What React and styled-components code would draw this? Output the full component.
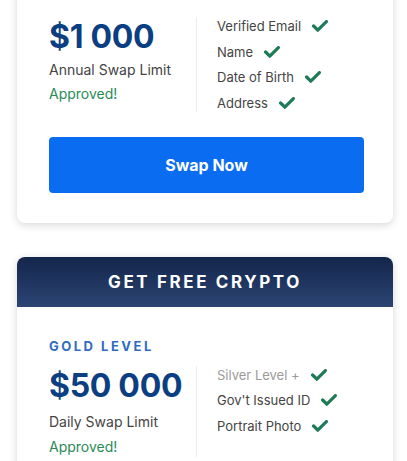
import React from "react";
import styled, { createGlobalStyle } from "styled-components";

const GlobalStyle = createGlobalStyle`
  html, body {
    margin: 0;
    padding: 0;
    background: #fff;
    font-family: Inter, "Noto Sans", sans-serif;
    overflow: hidden;
  }
`;

const Page = styled.div`
  width: 407px;
  height: 461px;
  overflow: hidden;
  padding-left: 17px;
  box-sizing: border-box;
  display: flex;
  flex-direction: column;
  gap: 34px;
`;

const Card = styled.div`
  width: 376px;
  background: #fff;
  border-radius: 8px;
  box-shadow: 0 2px 8px rgba(0, 0, 0, 0.16);
  overflow: hidden;
  flex-shrink: 0;
  margin-top: ${(p) => p.$offset || 0}px;
`;

const Header = styled.div`
  height: 50px;
  display: flex;
  align-items: center;
  justify-content: center;
  background: linear-gradient(180deg, #13254a 0%, #2c4574 100%);
  color: #fff;
  font-size: 17px;
  font-weight: 700;
  letter-spacing: 2.6px;
`;

const Body = styled.div`
  padding: ${(p) => p.$top}px 30px 30px 32px;
`;

const Level = styled.div`
  color: #2f6cc0;
  font-size: 13px;
  font-weight: 700;
  letter-spacing: 2.5px;
  line-height: 16px;
  margin-bottom: 12px;
`;

const Row = styled.div`
  display: flex;
`;

const Left = styled.div`
  width: 147px;
  display: flex;
  flex-direction: column;
`;

const Amount = styled.div`
  color: #0c3e82;
  font-size: 32px;
  font-weight: 700;
  line-height: 40px;
  letter-spacing: -0.3px;
`;

const Sub = styled.div`
  color: #444;
  font-size: 14px;
  line-height: 20px;
  margin-top: ${(p) => p.$space ?? 3}px;
`;

const Approved = styled.div`
  color: #2a8a57;
  font-size: 14px;
  line-height: 20px;
  margin-top: ${(p) => p.$space ?? 4}px;
`;

const Divider = styled.div`
  width: 1px;
  background: #ececec;
  margin-right: 20px;
`;

const List = styled.ul`
  list-style: none;
  margin: 0;
  padding: 0;
  display: flex;
  flex-direction: column;
  gap: 7.5px;
`;

const Item = styled.li`
  display: flex;
  align-items: center;
  gap: 11px;
  font-size: 13px;
  line-height: 18px;
  color: ${(p) => (p.$muted ? "#9a9a9a" : "#444")};
`;

const Button = styled.button`
  width: 315px;
  height: 56px;
  margin-top: 25px;
  border: none;
  border-radius: 4px;
  background: #0a6cf0;
  color: #fff;
  font-family: Inter, sans-serif;
  font-size: 16px;
  font-weight: 700;
  cursor: pointer;
`;

const Check = () => (
  <svg width="16" height="12" viewBox="0 0 16 12">
    <polyline
      points="1.6,6 5.8,10.2 14.4,1.6"
      fill="none"
      stroke="#1e7b57"
      strokeWidth="3.2"
      strokeLinecap="round"
      strokeLinejoin="round"
    />
  </svg>
);

export default function App() {
  return (
    <>
      <GlobalStyle />
      <Page>
        <Card $offset={-33}>
          <Body $top={50}>
            <Row>
              <Left>
                <Amount>$1 000</Amount>
                <Sub>Annual Swap Limit</Sub>
                <Approved>Approved!</Approved>
              </Left>
              <Divider />
              <List>
                <Item>Verified Email <Check /></Item>
                <Item>Name <Check /></Item>
                <Item>Date of Birth <Check /></Item>
                <Item>Address <Check /></Item>
              </List>
            </Row>
            <Button>Swap Now</Button>
          </Body>
        </Card>
        <Card>
          <Header>GET FREE CRYPTO</Header>
          <Body $top={31}>
            <Level>GOLD LEVEL</Level>
            <Row>
              <Left>
                <Amount>$50 000</Amount>
                <Sub $space={6}>Daily Swap Limit</Sub>
                <Approved $space={5}>Approved!</Approved>
              </Left>
              <Divider />
              <List>
                <Item $muted>Silver Level + <Check /></Item>
                <Item>Gov't Issued ID <Check /></Item>
                <Item>Portrait Photo <Check /></Item>
              </List>
            </Row>
          </Body>
        </Card>
      </Page>
    </>
  );
}
